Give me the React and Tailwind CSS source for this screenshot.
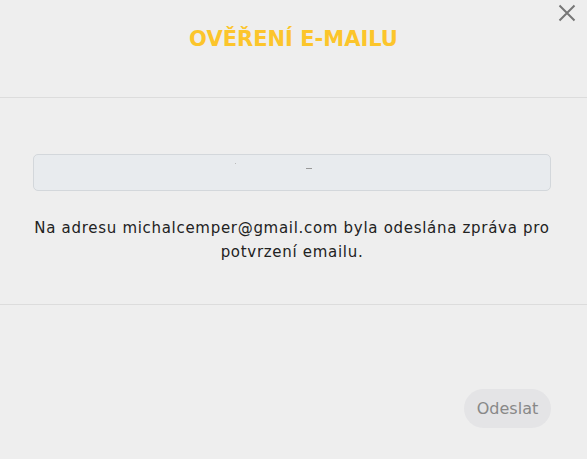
import React from 'react'

const App = () => {
  return (
    <div className="relative w-full h-[459px] bg-[#eeeeee] flex flex-col text-[#222]" style={{ fontFamily: '"DejaVu Sans", "Open Sans", sans-serif' }}>
      {/* Header */}
      <div className="h-[98px] border-b border-[#dcdcdc] flex justify-center pt-[24px]">
        <h1 className="text-[21px] leading-[30px] font-bold text-[#fcc52b]">OVĚŘENÍ E-MAILU</h1>
      </div>
      <button className="absolute top-[4px] right-[11px] text-[#777]">
        <svg width="18" height="18" viewBox="0 0 18 18" fill="none" stroke="currentColor" strokeWidth="2">
          <path d="M1.5 1.5L16.5 16.5M16.5 1.5L1.5 16.5" />
        </svg>
      </button>

      {/* Body */}
      <div className="border-b border-[#dcdcdc] pl-[33px] pr-[36px] pt-[56px] pb-[40px]">
        <div className="relative h-[37px] rounded-[5px] border border-[#d3d7db] bg-[#e8ebee]">
          <span className="absolute left-[201px] top-[8px] w-[1px] h-[1px] bg-[#bbb]" />
          <span className="absolute left-[272px] top-[13px] w-[6px] h-[1px] bg-[#999]" />
        </div>
        <p className="mt-[25px] text-center text-[15px] leading-[24px] tracking-[0.7px]">
          Na adresu michalcemper@gmail.com byla odeslána zpráva pro potvrzení emailu.
        </p>
      </div>

      {/* Footer */}
      <div className="flex justify-end pt-[84px] pr-[36px]">
        <button className="w-[87px] h-[39px] rounded-full bg-[#e4e4e6] text-[#888] text-[16px]">Odeslat</button>
      </div>
    </div>
  )
}

export default App
